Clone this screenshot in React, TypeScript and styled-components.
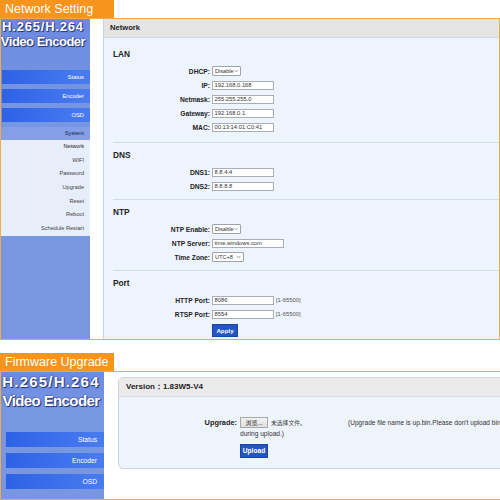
import React from 'react'
import styled, { createGlobalStyle } from 'styled-components'

const Global = createGlobalStyle`
  html, body { margin: 0; padding: 0; background: #fff; overflow: hidden; }
  body { font-family: "Liberation Sans", Arial, sans-serif; }
`

const Page = styled.div`
  width: 500px;
  height: 500px;
  overflow: hidden;
`

const Tag = styled.div<{ $mt?: number }>`
  width: 114px;
  height: 18px;
  margin-top: ${(p) => p.$mt ?? 0}px;
  padding-left: 5px;
  box-sizing: border-box;
  background: #f7941d;
  color: #fff;
  font-size: 12.5px;
  line-height: 18px;
  white-space: nowrap;
`

const Frame = styled.div<{ $w: number; $h: number }>`
  display: flex;
  width: ${(p) => p.$w}px;
  height: ${(p) => p.$h}px;
  border: 1px solid #f2a949;
  box-sizing: border-box;
  overflow: hidden;
`

const Sidebar = styled.div<{ $w: number }>`
  flex: none;
  width: ${(p) => p.$w}px;
  display: flex;
  flex-direction: column;
  background: linear-gradient(#6c8ae2, #7897e2 30%, #7897e0);
  overflow: hidden;
`

const Logo = styled.div<{ $size: number; $lh: number; $pr: number }>`
  padding-right: ${(p) => p.$pr}px;
  color: #fff;
  font-family: "Liberation Sans", Arial, sans-serif;
  font-weight: bold;
  font-size: ${(p) => p.$size}px;
  line-height: ${(p) => p.$lh}px;
  text-shadow: 1px 1px 0 #2c3a78, 0 0 2px #1c2860;
`

const LogoLine = styled.div<{ $ls?: number }>`
  display: flex;
  justify-content: center;
  white-space: nowrap;
  letter-spacing: ${(p) => p.$ls ?? 0}px;
`

const NavList = styled.div<{ $mt: number; $gap: number }>`
  display: flex;
  flex-direction: column;
  gap: ${(p) => p.$gap}px;
  margin-top: ${(p) => p.$mt}px;
`

const NavButton = styled.div<{ $h: number; $ml: number; $fs: number; $pr: number }>`
  height: ${(p) => p.$h}px;
  margin-left: ${(p) => p.$ml}px;
  padding-right: ${(p) => p.$pr}px;
  background: linear-gradient(to right, #2e62e6, #4a7cf0);
  color: #fff;
  font-size: ${(p) => p.$fs}px;
  line-height: ${(p) => p.$h}px;
  text-align: right;
`

const SystemHead = styled.div`
  height: 13px;
  margin-top: 5px;
  padding-right: 6px;
  background: #829fe8;
  color: #1b2444;
  font-size: 5.8px;
  line-height: 13px;
  text-align: right;
`

const SubMenu = styled.div`
  background: #e7edf9;
  padding-bottom: 0.5px;
`

const SubItem = styled.div<{ $active?: boolean }>`
  height: 13.7px;
  padding-right: 6px;
  color: ${(p) => (p.$active ? '#1a1a1a' : '#444')};
  font-size: 5.6px;
  line-height: 13.7px;
  text-align: right;
`

const Panel = styled.div`
  flex: 1;
  margin-left: 13px;
  display: flex;
  flex-direction: column;
  border-left: 1px solid #c6d3ea;
  background: #eef4fd;
`

const PanelHead = styled.div`
  height: 18px;
  padding-left: 6px;
  background: #e4e4e4;
  border-bottom: 1px solid #d2d9e4;
  color: #222;
  font-weight: bold;
  font-size: 7.6px;
  line-height: 18px;
`

const PanelBody = styled.div`
  padding-left: 9px;
`

const Group = styled.div<{ $pt: number; $pb: number }>`
  padding-top: ${(p) => p.$pt}px;
  padding-bottom: ${(p) => p.$pb}px;
  & + & {
    border-top: 1px solid #d3dbe8;
  }
`

const GroupTitle = styled.div`
  height: 10px;
  margin-bottom: 5px;
  color: #222;
  font-weight: bold;
  font-size: 8.3px;
  line-height: 10px;
`

const FormRow = styled.div`
  display: flex;
  align-items: center;
  height: 14px;
`

const FieldLabel = styled.div`
  width: 97px;
  margin-right: 2px;
  flex: none;
  color: #222;
  font-weight: bold;
  font-size: 6.7px;
  text-align: right;
  white-space: nowrap;
`

const TextBox = styled.div<{ $w: number }>`
  width: ${(p) => p.$w}px;
  height: 9px;
  box-sizing: border-box;
  padding-left: 1.5px;
  border: 1px solid #a9adb5;
  background: #fff;
  color: #333;
  font-size: 5.8px;
  line-height: 7px;
  white-space: nowrap;
  overflow: hidden;
`

const SelectBox = styled.div<{ $w: number }>`
  width: ${(p) => p.$w}px;
  height: 10px;
  box-sizing: border-box;
  padding: 0 2px 0 2px;
  display: flex;
  align-items: center;
  justify-content: space-between;
  border: 1px solid #9ea3ab;
  border-radius: 1px;
  background: #fff;
  color: #333;
  font-size: 5.6px;
  white-space: nowrap;
`

const Hint = styled.span`
  margin-left: 2px;
  color: #555;
  font-size: 5.8px;
  white-space: nowrap;
`

const BlueButton = styled.div<{ $w: number; $h: number; $fs: number }>`
  width: ${(p) => p.$w}px;
  height: ${(p) => p.$h}px;
  background: #2356c4;
  border: 1px solid #1a44a0;
  box-sizing: border-box;
  color: #fff;
  font-weight: bold;
  font-size: ${(p) => p.$fs}px;
  line-height: ${(p) => p.$h - 2}px;
  text-align: center;
`

const ButtonRow = styled.div`
  display: flex;
  margin-top: 3px;
  padding-left: 99px;
`

const Gap = styled.div<{ $w: number }>`
  flex: none;
  width: ${(p) => p.$w}px;
`

const UpgradePanel = styled.div`
  flex: none;
  width: 420px;
  height: 92px;
  margin-top: 5px;
  box-sizing: border-box;
  border: 1px solid #cdd3dc;
  border-radius: 5px;
  overflow: hidden;
  background: #eef4fc;
`

const UpgradeHead = styled.div`
  height: 18px;
  padding-left: 7px;
  background: #ebebeb;
  border-bottom: 1px solid #d8dde5;
  color: #222;
  font-weight: bold;
  font-size: 8px;
  line-height: 18px;
  white-space: nowrap;
`

const UpgradeBody = styled.div`
  padding-top: 20px;
  display: flex;
`

const UpLabel = styled.div`
  width: 118px;
  flex: none;
  margin-right: 3px;
  color: #222;
  font-weight: bold;
  font-size: 7.4px;
  line-height: 11px;
  text-align: right;
`

const UpContent = styled.div`
  display: flex;
  flex-direction: column;
  color: #333;
  font-size: 6.6px;
`

const FileLine = styled.div`
  display: flex;
  align-items: center;
  height: 11px;
  white-space: nowrap;
`

const BrowseButton = styled.div`
  width: 28px;
  height: 11px;
  box-sizing: border-box;
  border: 1px solid #a8a8a8;
  background: linear-gradient(#f2f2f2, #dedede);
  color: #333;
  font-size: 6px;
  line-height: 9px;
  text-align: center;
  font-family: "Noto Sans CJK SC", "Liberation Sans", sans-serif;
`

const NoFile = styled.span`
  margin-left: 3px;
  width: 77px;
  color: #444;
  font-size: 5.8px;
  font-family: "Noto Sans CJK SC", "Liberation Sans", sans-serif;
`

const WrapLine = styled.div`
  height: 12px;
  line-height: 12px;
  white-space: nowrap;
`

const UploadWrap = styled.div`
  margin-top: 4px;
`

function Chevron() {
  return (
    <svg width="5" height="4" viewBox="0 0 5 4">
      <path d="M0.6 1 L2.5 2.9 L4.4 1" fill="none" stroke="#666" strokeWidth="0.7" />
    </svg>
  )
}

const lan = [
  { label: 'IP:', value: '192.168.0.168' },
  { label: 'Netmask:', value: '255.255.255.0' },
  { label: 'Gateway:', value: '192.168.0.1' },
  { label: 'MAC:', value: '00:13:14:01:C0:41' },
]

const subMenu = ['Network', 'WIFI', 'Password', 'Upgrade', 'Reset', 'Reboot', 'Schedule Restart']

export default function App() {
  return (
    <Page>
      <Global />
      <Tag>Network Setting</Tag>
      <Frame $w={500} $h={322}>
        <Sidebar $w={89}>
          <Logo $size={13} $lh={15} $pr={5}>
            <LogoLine $ls={0.8}>H.265/H.264</LogoLine>
            <LogoLine $ls={-0.5}>Video Encoder</LogoLine>
          </Logo>
          <NavList $mt={21} $gap={5}>
            {['Status', 'Encoder', 'OSD'].map((n) => (
              <NavButton key={n} $h={14} $ml={1} $fs={5.8} $pr={6}>
                {n}
              </NavButton>
            ))}
          </NavList>
          <SystemHead>System</SystemHead>
          <SubMenu>
            {subMenu.map((s) => (
              <SubItem key={s} $active={s === 'Network'}>
                {s}
              </SubItem>
            ))}
          </SubMenu>
        </Sidebar>
        <Panel>
          <PanelHead>Network</PanelHead>
          <PanelBody>
            <Group $pt={11} $pb={8}>
              <GroupTitle>LAN</GroupTitle>
              <FormRow>
                <FieldLabel>DHCP:</FieldLabel>
                <SelectBox $w={29}>
                  Disable <Chevron />
                </SelectBox>
              </FormRow>
              {lan.map((r) => (
                <FormRow key={r.label}>
                  <FieldLabel>{r.label}</FieldLabel>
                  <TextBox $w={62}>{r.value}</TextBox>
                </FormRow>
              ))}
            </Group>
            <Group $pt={7} $pb={6}>
              <GroupTitle>DNS</GroupTitle>
              <FormRow>
                <FieldLabel>DNS1:</FieldLabel>
                <TextBox $w={62}>8.8.4.4</TextBox>
              </FormRow>
              <FormRow>
                <FieldLabel>DNS2:</FieldLabel>
                <TextBox $w={62}>8.8.8.8</TextBox>
              </FormRow>
            </Group>
            <Group $pt={7} $pb={6}>
              <GroupTitle>NTP</GroupTitle>
              <FormRow>
                <FieldLabel>NTP Enable:</FieldLabel>
                <SelectBox $w={29}>
                  Disable <Chevron />
                </SelectBox>
              </FormRow>
              <FormRow>
                <FieldLabel>NTP Server:</FieldLabel>
                <TextBox $w={72}>time.windows.com</TextBox>
              </FormRow>
              <FormRow>
                <FieldLabel>Time Zone:</FieldLabel>
                <SelectBox $w={32}>
                  UTC+8 <Chevron />
                </SelectBox>
              </FormRow>
            </Group>
            <Group $pt={7} $pb={6}>
              <GroupTitle>Port</GroupTitle>
              <FormRow>
                <FieldLabel>HTTP Port:</FieldLabel>
                <TextBox $w={62}>8086</TextBox>
                <Hint>[1-65500]</Hint>
              </FormRow>
              <FormRow>
                <FieldLabel>RTSP Port:</FieldLabel>
                <TextBox $w={62}>8554</TextBox>
                <Hint>[1-65500]</Hint>
              </FormRow>
              <ButtonRow>
                <BlueButton $w={26} $h={13} $fs={6.2}>
                  Apply
                </BlueButton>
              </ButtonRow>
            </Group>
          </PanelBody>
        </Panel>
      </Frame>

      <Tag $mt={13}>Firmware Upgrade</Tag>
      <Frame $w={540} $h={129}>
        <Sidebar $w={103}>
          <Logo $size={15} $lh={19} $pr={3}>
            <LogoLine $ls={1.2}>H.265/H.264</LogoLine>
            <LogoLine $ls={-0.6}>Video Encoder</LogoLine>
          </Logo>
          <NavList $mt={22} $gap={6}>
            {['Status', 'Encoder', 'OSD'].map((n) => (
              <NavButton key={n} $h={15} $ml={5} $fs={6.7} $pr={7}>
                {n}
              </NavButton>
            ))}
          </NavList>
        </Sidebar>
        <Gap $w={14} />
        <UpgradePanel>
          <UpgradeHead>Version：1.83W5-V4</UpgradeHead>
          <UpgradeBody>
            <UpLabel>Upgrade:</UpLabel>
            <UpContent>
              <FileLine>
                <BrowseButton>浏览...</BrowseButton>
                <NoFile>未选择文件。</NoFile>
                <span>(Upgrade file name is up.bin.Please don't upload bin file or power off</span>
              </FileLine>
              <WrapLine>during upload.)</WrapLine>
              <UploadWrap>
                <BlueButton $w={28} $h={14} $fs={6.6}>
                  Upload
                </BlueButton>
              </UploadWrap>
            </UpContent>
          </UpgradeBody>
        </UpgradePanel>
      </Frame>
    </Page>
  )
}
